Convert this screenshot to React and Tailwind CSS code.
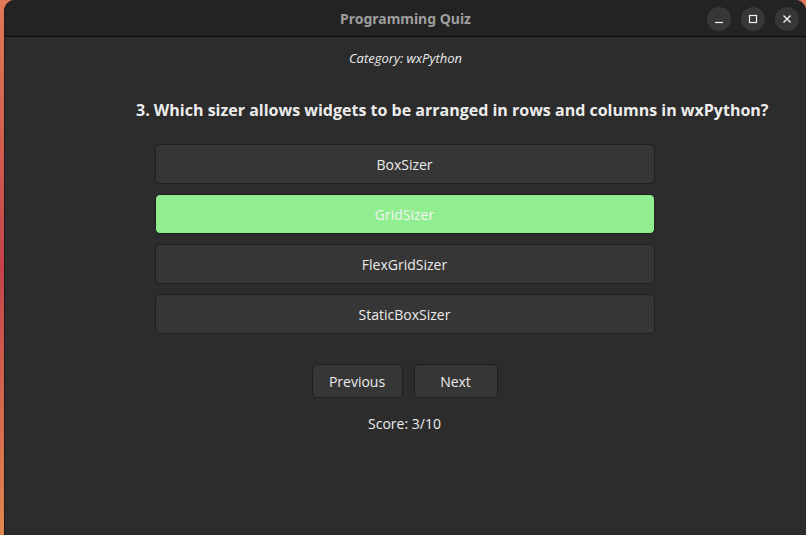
import React, { useState } from 'react';

const options = ['BoxSizer', 'GridSizer', 'FlexGridSizer', 'StaticBoxSizer'];

function WinButton({ children }) {
  return (
    <div className="flex h-[24px] w-[24px] items-center justify-center rounded-full bg-[#373737] text-[#f2f2f2]">
      {children}
    </div>
  );
}

function App() {
  const [selected, setSelected] = useState(1);

  return (
    <div
      className="flex h-[535px] w-[806px] overflow-hidden bg-gradient-to-b from-[#e07a55] via-[#c4424a] to-[#e2874e]"
      style={{ fontFamily: '"Open Sans", "Noto Sans", sans-serif' }}
    >
      <div className="w-[4px] shrink-0" />
      <div className="flex flex-1 flex-col overflow-hidden rounded-tl-[11px] rounded-tr-[11px] border-l border-[#1a1a1a] bg-[#2c2c2c]">
        <div className="relative flex h-[37px] shrink-0 items-center justify-center border-b border-[#0c0c0c] bg-[#232323]">
          <span className="text-[14px] font-bold text-[#9e9e9e]" style={{ fontFamily: '"Noto Sans", sans-serif' }}>
            Programming Quiz
          </span>
          <div className="absolute right-[7px] top-[7px] flex gap-[10px]">
            <WinButton>
              <svg width="10" height="10" viewBox="0 0 10 10"><path d="M1 8.5h8" stroke="currentColor" strokeWidth="1.2" /></svg>
            </WinButton>
            <WinButton>
              <svg width="10" height="10" viewBox="0 0 10 10"><rect x="1.5" y="1.5" width="7" height="7" fill="none" stroke="currentColor" strokeWidth="1.2" /></svg>
            </WinButton>
            <WinButton>
              <svg width="10" height="10" viewBox="0 0 10 10"><path d="M1.5 1.5l7 7M8.5 1.5l-7 7" stroke="currentColor" strokeWidth="1.4" /></svg>
            </WinButton>
          </div>
        </div>

        <div className="flex flex-col items-center text-[#ececec]">
          <p className="mt-[12px] text-[13px] italic leading-[18px]">Category: wxPython</p>
          <p className="mt-[32px] w-full pl-[131px] text-[16px] font-bold leading-[22px]">
            3. Which sizer allows widgets to be arranged in rows and columns in wxPython?
          </p>
          <div className="mt-[23px] flex flex-col gap-[10px] pr-[2px]">
            {options.map((opt, i) => (
              <button
                key={opt}
                onClick={() => setSelected(i)}
                className={
                  i === selected
                    ? 'h-[40px] w-[500px] rounded-[5px] border border-[#1f1f1f] bg-[#90ee90] text-[14px] text-[#f4f4f4]'
                    : 'h-[40px] w-[500px] rounded-[5px] border border-[#1f1f1f] bg-[#363636] text-[14px] text-[#ececec]'
                }
              >
                {opt}
              </button>
            ))}
          </div>
          <div className="mt-[30px] flex gap-[11px] pr-[2px]">
            <button className="h-[34px] w-[91px] rounded-[5px] border border-[#1f1f1f] bg-[#363636] text-[14px]">Previous</button>
            <button className="h-[34px] w-[84px] rounded-[5px] border border-[#1f1f1f] bg-[#363636] text-[14px]">Next</button>
          </div>
          <p className="mt-[16px] pr-[2px] text-[14px] leading-[20px]">Score: 3/10</p>
        </div>
      </div>
    </div>
  );
}

export default App;
